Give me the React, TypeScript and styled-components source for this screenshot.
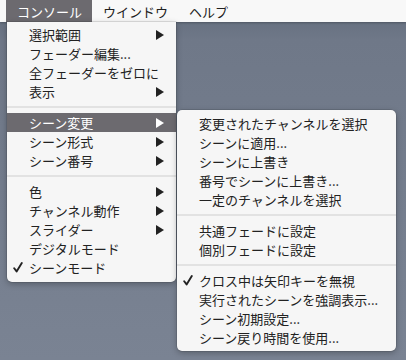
import styled, { createGlobalStyle } from "styled-components";

const GlobalStyle = createGlobalStyle`
  html, body {
    margin: 0;
    padding: 0;
  }
  body {
    font-family: "Noto Sans CJK JP", "Noto Sans", sans-serif;
    -webkit-font-smoothing: antialiased;
  }
`;

type Entry =
  | { kind: "item"; label: string; sub?: boolean; checked?: boolean; active?: boolean }
  | { kind: "sep" };

const mainItems: Entry[] = [
  { kind: "item", label: "選択範囲", sub: true },
  { kind: "item", label: "フェーダー編集..." },
  { kind: "item", label: "全フェーダーをゼロに" },
  { kind: "item", label: "表示", sub: true },
  { kind: "sep" },
  { kind: "item", label: "シーン変更", sub: true, active: true },
  { kind: "item", label: "シーン形式", sub: true },
  { kind: "item", label: "シーン番号", sub: true },
  { kind: "sep" },
  { kind: "item", label: "色", sub: true },
  { kind: "item", label: "チャンネル動作", sub: true },
  { kind: "item", label: "スライダー", sub: true },
  { kind: "item", label: "デジタルモード" },
  { kind: "item", label: "シーンモード", checked: true },
];

const subItems: Entry[] = [
  { kind: "item", label: "変更されたチャンネルを選択" },
  { kind: "item", label: "シーンに適用..." },
  { kind: "item", label: "シーンに上書き" },
  { kind: "item", label: "番号でシーンに上書き..." },
  { kind: "item", label: "一定のチャンネルを選択" },
  { kind: "sep" },
  { kind: "item", label: "共通フェードに設定" },
  { kind: "item", label: "個別フェードに設定" },
  { kind: "sep" },
  { kind: "item", label: "クロス中は矢印キーを無視", checked: true },
  { kind: "item", label: "実行されたシーンを強調表示..." },
  { kind: "item", label: "シーン初期設定..." },
  { kind: "item", label: "シーン戻り時間を使用..." },
];

function Arrow() {
  return (
    <svg width="8" height="10" viewBox="0 0 8 10">
      <path d="M0 0 L8 5 L0 10 Z" fill="currentColor" />
    </svg>
  );
}

function Check() {
  return (
    <svg width="10" height="11" viewBox="0 0 10 11">
      <path
        d="M1.2 6.2 L3.6 9.4 L8.8 1"
        fill="none"
        stroke="currentColor"
        strokeWidth="1.9"
        strokeLinecap="round"
        strokeLinejoin="round"
      />
    </svg>
  );
}

function MenuList({ entries }: { entries: Entry[] }) {
  return (
    <>
      {entries.map((e, i) =>
        e.kind === "sep" ? (
          <Separator key={i} />
        ) : (
          <Row key={i} $active={e.active}>
            <CheckSlot>{e.checked && <Check />}</CheckSlot>
            <Label>{e.label}</Label>
            {e.sub && (
              <ArrowSlot>
                <Arrow />
              </ArrowSlot>
            )}
          </Row>
        )
      )}
    </>
  );
}

export default function App() {
  return (
    <>
      <GlobalStyle />
      <Desktop>
        <MenuBar>
          <BarItem $active>コンソール</BarItem>
          <BarItem>ウインドウ</BarItem>
          <BarItem>ヘルプ</BarItem>
        </MenuBar>
        <Dropdown>
          <MenuList entries={mainItems} />
        </Dropdown>
        <SubMenu>
          <MenuList entries={subItems} />
        </SubMenu>
      </Desktop>
    </>
  );
}

const Desktop = styled.div`
  position: relative;
  width: 406px;
  height: 360px;
  overflow: hidden;
  background: linear-gradient(180deg, #5f6979 0px, #6f7888 40px, #7a8393 360px);
`;

const MenuBar = styled.div`
  display: flex;
  align-items: stretch;
  height: 22px;
  padding-left: 6px;
  background: #f8f8f8;
  box-shadow: 0 1px 2px rgba(0, 0, 0, 0.25);
`;

const BarItem = styled.div<{ $active?: boolean }>`
  display: flex;
  align-items: center;
  padding: 0 10px 0 11px;
  font-size: 13px;
  color: ${(p) => (p.$active ? "#ffffff" : "#202020")};
  background: ${(p) => (p.$active ? "#6c6a6f" : "transparent")};
`;

const Panel = styled.div`
  position: absolute;
  display: flex;
  flex-direction: column;
  background: #f6f6f6;
  box-shadow: 0 2px 6px rgba(0, 0, 0, 0.28), 0 0 0 0.5px rgba(0, 0, 0, 0.18);
`;

const Dropdown = styled(Panel)`
  left: 7px;
  top: 22px;
  width: 169px;
  padding: 3px 0 5px;
  border-radius: 0 0 5px 5px;
`;

const SubMenu = styled(Panel)`
  left: 177px;
  top: 110px;
  width: 219px;
  padding: 4px 0 4px;
  border-radius: 5px;
  z-index: 2;
`;

const Row = styled.div<{ $active?: boolean }>`
  display: flex;
  align-items: center;
  height: 19px;
  padding-right: 12px;
  font-size: 13px;
  color: ${(p) => (p.$active ? "#ffffff" : "#222222")};
  background: ${(p) => (p.$active ? "#6c6a6f" : "transparent")};
`;

const CheckSlot = styled.div`
  display: flex;
  align-items: center;
  justify-content: flex-start;
  width: 16px;
  padding-left: 6px;
`;

const Label = styled.span`
  flex: 1;
  white-space: nowrap;
  line-height: 19px;
`;

const ArrowSlot = styled.div`
  display: flex;
  align-items: center;
`;

const Separator = styled.div`
  height: 2px;
  margin: 5px 0;
  background: #e2e2e2;
`;
